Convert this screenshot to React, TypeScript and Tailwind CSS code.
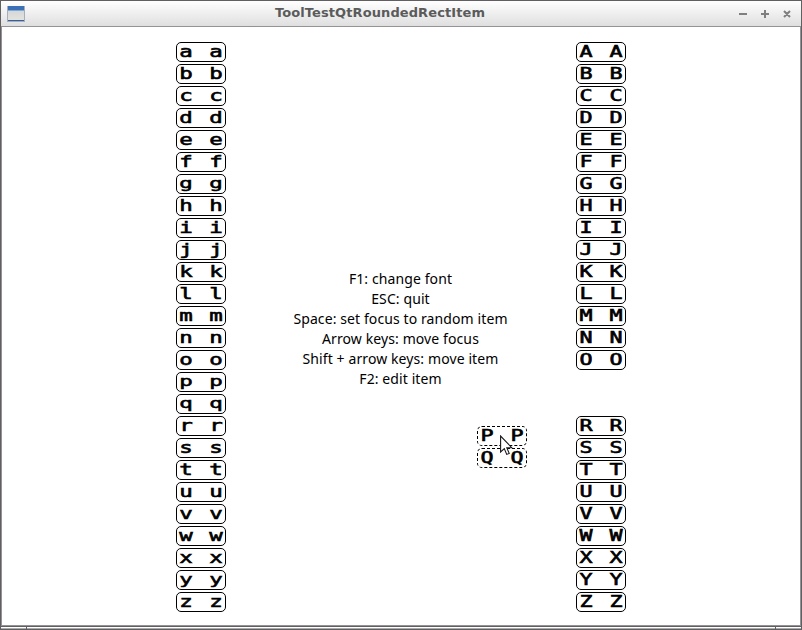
import React from "react";

const lower = "abcdefghijklmnopqrstuvwxyz".split("");
const upperTop = "ABCDEFGHIJKLMNO".split("");
const upperBottom = "RSTUVWXYZ".split("");

const help = [
  "F1: change font",
  "ESC: quit",
  "Space: set focus to random item",
  "Arrow keys: move focus",
  "Shift + arrow keys: move item",
  "F2: edit item",
];

function glyphSize(c: string) {
  // Letters with a descender are squeezed so that they stay within the item.
  if ("gpqy".includes(c)) return "text-[16px] scale-x-[1.4] scale-y-[0.83]";
  if (c === c.toLowerCase()) return "text-[16px] scale-x-[1.4]";
  return "text-[15.5px] scale-x-[1.4]";
}

function Glyph({ c }: { c: string }) {
  return (
    <span className={`block w-[10px] text-center leading-[18px] [-webkit-text-stroke:0.6px_black] ${glyphSize(c)}`}>
      {c}
    </span>
  );
}

function Item({ c, dashed = false }: { c: string; dashed?: boolean }) {
  return (
    <div
      className={`flex h-5 w-[50px] shrink-0 items-start justify-between rounded-[5px] border border-black bg-white px-[4px] font-['DejaVu_Sans_Mono',monospace] ${
        dashed ? "border-dashed" : ""
      }`}
    >
      <Glyph c={c} />
      <Glyph c={c} />
    </div>
  );
}

function Column({ items }: { items: string[] }) {
  return (
    <div className="flex flex-col gap-[2px]">
      {items.map((c) => (
        <Item key={c} c={c} />
      ))}
    </div>
  );
}

function TitleBar() {
  return (
    <div className="flex h-[25px] items-center bg-gradient-to-b from-white to-[#dfdfdf] pr-[9px] pl-[6px]">
      <svg width="18" height="16" viewBox="0 0 18 16" shapeRendering="crispEdges">
        <defs>
          <linearGradient id="pane" x1="0" y1="0" x2="0" y2="1">
            <stop offset="0" stopColor="#d2d3d1" />
            <stop offset="1" stopColor="#e4e4e1" />
          </linearGradient>
        </defs>
        <rect width="18" height="16" fill="#a3afbf" />
        <rect x="1" y="1" width="16" height="14" fill="url(#pane)" />
        <rect x="1" y="0" width="16" height="4" fill="#3c70b6" />
        <rect x="1" y="4" width="16" height="1" fill="#82a9dc" />
        <rect x="1" y="14" width="16" height="1" fill="#365f9c" />
      </svg>
      <div className="flex-1 pr-[4px] text-center font-['DejaVu_Sans',sans-serif] text-[13px] leading-none font-bold tracking-[0.1px] text-[#5b5b5b]">
        <p className="pb-[3px]">ToolTestQtRoundedRectItem</p>
      </div>
      <svg width="53" height="10" viewBox="0 0 53 10" stroke="#7f7f7f" strokeWidth="2" fill="none">
        <path d="M0 5h8M22 5h8M26 1v8M45 2l6 6M51 2l-6 6" />
      </svg>
    </div>
  );
}

export default function App() {
  return (
    <div className="flex h-[630px] w-[802px] flex-col overflow-hidden bg-white text-black">
      <div className="flex h-[627px] flex-col border border-[#625f62]">
        <TitleBar />
        <div className="relative flex flex-1 justify-between border border-[#949294] bg-white px-[174px] pt-[15px]">
          <Column items={lower} />
          <div className="mt-[227px] pr-[1px] text-center font-['Noto_Sans',sans-serif] text-[14px] leading-5 tracking-[0.1px] whitespace-nowrap">
            {help.map((line) => (
              <p key={line}>{line}</p>
            ))}
          </div>
          <div className="flex flex-col gap-[46px]">
            <Column items={upperTop} />
            <Column items={upperBottom} />
          </div>
          <div className="absolute top-[399px] left-[475px] flex flex-col gap-[2px]">
            <Item c="P" dashed />
            <Item c="Q" dashed />
          </div>
          <svg className="absolute top-[408px] left-[498px]" width="13" height="21" viewBox="0 0 13 21">
            <path d="M.6 1v16l3.7-3.4 2.4 5.8 2.5-1-2.4-5.7h5z" fill="white" stroke="#171717" strokeWidth="1.1" />
          </svg>
        </div>
      </div>
      <div className="flex h-[3px] border-x border-b border-[#625f62]">
        <div className="w-[25px] border-t border-b border-t-white border-b-[#aaa]" />
        <div className="w-[1px] bg-[#625f62]" />
        <div className="flex-1 border-t border-b border-t-white border-b-[#aaa]" />
        <div className="w-[1px] bg-[#625f62]" />
        <div className="w-[25px] border-t border-b border-t-white border-b-[#aaa]" />
      </div>
    </div>
  );
}
